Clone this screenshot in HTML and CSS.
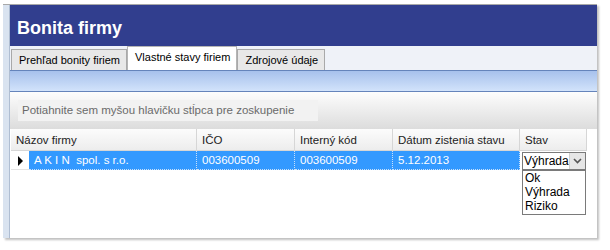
FILE: index.html
```html
<!DOCTYPE html>
<html lang="sk">
<head>
  <meta charset="UTF-8">
  <title>Bonita firmy</title>
  <link rel="stylesheet" href="styles.css">
</head>
<body>
  <div class="window">
    <div class="content">
      <header class="title-bar">
        <h1>Bonita firmy</h1>
      </header>
      <nav class="tabs">
        <div class="tab">Prehľad bonity firiem</div>
        <div class="tab active">Vlastné stavy firiem</div>
        <div class="tab">Zdrojové údaje</div>
      </nav>
      <div class="blue-bar"></div>
      <div class="group-panel">
        <div class="group-hint">Potiahnite sem myšou hlavičku stĺpca pre zoskupenie</div>
      </div>
      <div class="grid">
        <div class="grid-row header">
          <div class="cell c-name">Názov firmy</div>
          <div class="cell c-ico">IČO</div>
          <div class="cell c-code">Interný kód</div>
          <div class="cell c-date">Dátum zistenia stavu</div>
          <div class="cell c-state">Stav</div>
        </div>
        <div class="grid-row data">
          <div class="indicator"><span class="arrow"></span></div>
          <div class="cell c-name2 sel">A K I N&nbsp; spol. s r.o.</div>
          <div class="cell c-ico sel">003600509</div>
          <div class="cell c-code sel">003600509</div>
          <div class="cell c-date sel">5.12.2013</div>
          <div class="cell c-state combo-cell">
            <div class="combo">
              <span class="combo-text">Výhrada</span>
              <span class="combo-btn">
                <svg width="9" height="6" viewBox="0 0 9 6"><path d="M1 1 L4.5 4.5 L8 1" fill="none" stroke="#555" stroke-width="1.6"/></svg>
              </span>
            </div>
            <ul class="combo-list">
              <li>Ok</li>
              <li>Výhrada</li>
              <li>Riziko</li>
            </ul>
          </div>
        </div>
      </div>
    </div>
  </div>
</body>
</html>
```

FILE: styles.css
```css
* {
  margin: 0;
  padding: 0;
  box-sizing: border-box;
}

body {
  font-family: "Liberation Sans", Arial, sans-serif;
  font-size: 11.5px;
  background-color: #fff;
  width: 610px;
  height: 250px;
  overflow: hidden;
}

.window {
  margin: 4px 0 0 3px;
  width: 594px;
  height: 234px;
  border-top: 1px solid #a8a8a8;
  background-color: #d9e3f0;
  padding-left: 6px;
  box-shadow: 2px 2px 2px rgba(0, 0, 0, 0.25);
}

.content {
  background-color: #fff;
  height: 100%;
  border-left: 1px solid #aebdd2;
  display: flex;
  flex-direction: column;
}

.title-bar {
  height: 41px;
  background-color: #313e8e;
  padding: 6px 0 0 7px;
  display: flex;
  align-items: center;
}

.title-bar h1 {
  color: #fff;
  font-size: 18px;
  font-weight: bold;
}

.tabs {
  height: 24px;
  background-color: #eff2f8;
  display: flex;
  align-items: flex-end;
  padding-left: 1px;
}

.tab {
  height: 21px;
  padding: 4px 6px 0 7px;
  font-size: 11px;
  background-color: #e8e8e8;
  border: 1px solid #a9a9a9;
  border-bottom: none;
  color: #000;
  white-space: nowrap;
}

.tab.active {
  height: 24px;
  padding-top: 4px;
  background-color: #fff;
  border-color: #b5b5b5;
}

.blue-bar {
  height: 22px;
  background: linear-gradient(#a7c1ec, #d2e3fb);
  border-top: 1px solid #6584bb;
  border-bottom: 1px solid #6584bb;
}

.group-panel {
  height: 37px;
  background: linear-gradient(#fdfdfd, #dcdcdc);
  padding: 8px 0 0 8px;
}

.group-hint {
  width: 300px;
  height: 21px;
  background-color: #f2f2f2;
  color: #6a6a6a;
  padding: 4px 0 0 4px;
  white-space: nowrap;
}

.grid {
  flex: 1;
  background-color: #fff;
  padding-left: 1px;
}

.grid-row {
  display: flex;
  height: 21px;
}

.grid-row.header {
  height: 22px;
  background: linear-gradient(#fcfcfc, #ececec);
  width: 576px;
}

.header .cell {
  border-right: 1px solid #d6d6d6;
  border-bottom: 1px solid #d6d6d6;
  padding: 5px 0 0 5px;
  color: #222;
}

.cell {
  white-space: nowrap;
}

.c-name { width: 186px; }
.c-name2 { width: 168px; }
.c-ico { width: 98px; }
.c-code { width: 98px; }
.c-date { width: 127px; }
.c-state { width: 67px; }

.data {
  height: 19px;
}

.indicator {
  width: 18px;
  display: flex;
  align-items: center;
  justify-content: center;
  border-bottom: 1px solid #e4e4e4;
}

.arrow {
  width: 0;
  height: 0;
  border-top: 5px solid transparent;
  border-bottom: 5px solid transparent;
  border-left: 5px solid #000;
  margin-top: 2px;
}

.sel {
  background-color: #3399ff;
  color: #fff;
  padding: 3px 0 0 5px;
  border-right: 1px dotted #c8e0fa;
  border-bottom: 1px dotted #c8e0fa;
}

.combo-cell {
  position: relative;
  padding: 1px 0 0 2px;
}

.combo {
  width: 64px;
  height: 18px;
  border: 1px solid #7a7a7a;
  background-color: #fff;
  display: flex;
  align-items: center;
  justify-content: space-between;
}

.combo-text {
  padding-left: 1px;
  font-size: 12px;
}

.combo-btn {
  width: 16px;
  height: 16px;
  background-color: #e6e6e6;
  border-left: 1px solid #cfcfcf;
  display: flex;
  align-items: center;
  justify-content: center;
}

.combo-list {
  position: absolute;
  left: 2px;
  top: 19px;
  width: 64px;
  list-style: none;
  background-color: #fff;
  border: 1px solid #7a7a7a;
  padding: 0 0 1px 2px;
  font-size: 12px;
  line-height: 14px;
}
```
